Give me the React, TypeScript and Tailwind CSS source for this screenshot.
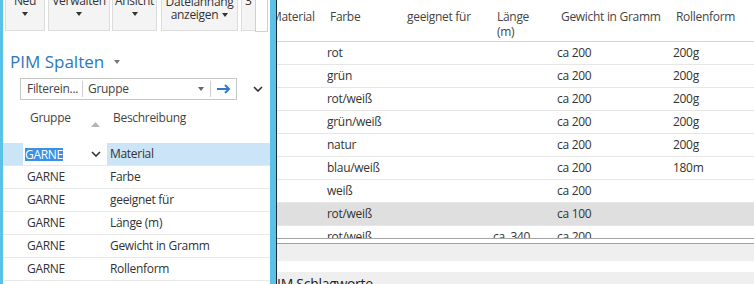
import React from "react";

const gridCols = "grid grid-cols-[268px_59px_77px_89px_64px_116px_81px]";

const rows = [
  { farbe: "rot", laenge: "", gewicht: "ca 200", rolle: "200g" },
  { farbe: "grün", laenge: "", gewicht: "ca 200", rolle: "200g" },
  { farbe: "rot/weiß", laenge: "", gewicht: "ca 200", rolle: "200g" },
  { farbe: "grün/weiß", laenge: "", gewicht: "ca 200", rolle: "200g" },
  { farbe: "natur", laenge: "", gewicht: "ca 200", rolle: "200g" },
  { farbe: "blau/weiß", laenge: "", gewicht: "ca 200", rolle: "180m" },
  { farbe: "weiß", laenge: "", gewicht: "ca 200", rolle: "" },
  { farbe: "rot/weiß", laenge: "", gewicht: "ca 100", rolle: "", active: true },
  { farbe: "rot/weiß", laenge: "ca. 340", gewicht: "ca 200", rolle: "" },
];

const spalten = ["Material", "Farbe", "geeignet für", "Länge (m)", "Gewicht in Gramm", "Rollenform"];

function Caret() {
  return (
    <svg width="6" height="4" viewBox="0 0 6 4" className="inline-block">
      <path d="M0 0h6L3 4z" fill="#333" />
    </svg>
  );
}

function Chevron() {
  return (
    <svg width="10" height="6" viewBox="0 0 10 6">
      <path d="M1 1l4 4 4-4" stroke="#333" strokeWidth="1.6" fill="none" />
    </svg>
  );
}

function ToolButton({ label, second, className }: { label: string; second?: string; className: string }) {
  return (
    <div
      className={`h-[31px] shrink-0 overflow-hidden leading-[13px] bg-[#f4f4f4] border border-t-0 border-[#dcdcdc] ${className}`}
    >
      <div className={`flex flex-col items-center ${second ? "-mt-[5px]" : "-mt-[6px]"}`}>
        <span>{label}</span>
        {second ? (
          <span className="flex items-center gap-[4px]">
            {second} <Caret />
          </span>
        ) : (
          <span className="h-[13px] flex items-center">
            <Caret />
          </span>
        )}
      </div>
    </div>
  );
}

export default function App() {
  return (
    <div
      className="relative w-[754px] h-[284px] overflow-hidden bg-white text-[12px] text-[#333] tracking-[-0.3px]"
      style={{ fontFamily: '"Open Sans", "Noto Sans", sans-serif' }}
    >
      {/* Hintergrund: Tabelle */}
      <div className="flex flex-col h-full">
        <div className="h-[239px] shrink-0 border-b border-[#a5a5a5] overflow-hidden">
          <div className={`${gridCols} h-[42px] border-b border-[#d5d5d5] text-[#444]`}>
            <div />
            <div className="pl-[3px] pt-[9px] leading-[15px]">Material</div>
            <div className="pl-[3px] pt-[9px] leading-[15px]">Farbe</div>
            <div className="pl-[3px] pt-[9px] leading-[15px]">geeignet für</div>
            <div className="pl-[4px] pt-[9px] leading-[15px]">
              Länge
              <br />
              (m)
            </div>
            <div className="pl-[4px] pt-[9px] leading-[15px]">Gewicht in Gramm</div>
            <div className="pl-[3px] pt-[9px] leading-[15px]">Rollenform</div>
          </div>
          {rows.map((r, i) => (
            <div
              key={i}
              className={`${gridCols} h-[23px] border-b border-[#e6e6e6] leading-[22px] ${r.active ? "bg-[#dfdfdf]" : ""}`}
            >
              <div />
              <div />
              <div>{r.farbe}</div>
              <div />
              <div>{r.laenge}</div>
              <div>{r.gewicht}</div>
              <div>{r.rolle}</div>
            </div>
          ))}
        </div>
        <div className="h-[4px] shrink-0" />
        <div className="h-[1px] shrink-0 bg-[#79a9e3]" />
        <div className="h-[17px] shrink-0 bg-[#efefef]" />
        <div className="h-[11px] shrink-0 bg-white" />
        <div className="h-[12px] shrink-0 overflow-hidden bg-[#efefef] pl-[269px] pt-[3px] text-[14px] leading-[18px] text-[#222]">
          PIM Schlagworte
        </div>
      </div>

      {/* Flyout: PIM Spalten */}
      <div className="absolute left-0 top-0 h-full w-[277px] flex border-r border-[#1d2b3a]">
        <div className="flex-1 flex flex-col bg-white border-l-[3px] border-r-[6px] border-[#5bc2e7]">
          <div className="flex items-start h-[32px] shrink-0 pl-[2px]">
            <ToolButton label="Neu" className="w-[40px]" />
            <ToolButton label="Verwalten" className="w-[62px] ml-[3px]" />
            <ToolButton label="Ansicht" className="w-[45px] ml-[2px]" />
            <ToolButton label="Dateianhang" second="anzeigen" className="w-[77px] ml-[4px]" />
            <div className="h-[31px] w-[14px] ml-[3px] bg-[#f4f4f4] border border-t-0 border-r-0 border-[#dcdcdc] leading-[13px] pl-[3px] overflow-hidden">
              <div className="-mt-[6px]">3</div>
            </div>
            <div className="h-[32px] w-[13px] bg-white border border-t-0 border-[#d0d0d0]" />
          </div>

          <div className="mt-[18px] pl-[7px] flex items-center gap-[10px] h-[24px] shrink-0">
            <span className="text-[17px] tracking-normal text-[#2b77bf]">PIM Spalten</span>
            <svg width="6" height="4" viewBox="0 0 6 4">
              <path d="M0 0h6L3 4z" fill="#777" />
            </svg>
          </div>

          <div className="mt-[4px] flex items-center h-[22px] shrink-0">
            <div className="ml-[17px] w-[217px] h-[22px] border border-[#c6c6c6] flex items-center">
              <span className="w-[61px] pl-[6px] text-[#444]">Filterein...</span>
              <span className="w-px h-[16px] bg-[#cfcfcf]" />
              <span className="flex-1 pl-[5px] text-[#444]">Gruppe</span>
              <svg width="6" height="4" viewBox="0 0 6 4" className="mr-[6px]">
                <path d="M0 0h6L3 4z" fill="#666" />
              </svg>
              <span className="w-px h-[16px] bg-[#cfcfcf]" />
              <svg width="14" height="10" viewBox="0 0 14 10" className="ml-[6px] mr-[5px]">
                <path d="M0 5h12M8 1l4 4-4 4" stroke="#2f7ac6" strokeWidth="2" fill="none" />
              </svg>
            </div>
            <div className="ml-[16px]">
              <Chevron />
            </div>
          </div>

          <div className="h-[43px] shrink-0 flex text-[#444] leading-[16px] pt-[10px]">
            <div className="w-[104px] pl-[27px] relative">
              Gruppe
              <svg width="9" height="5" viewBox="0 0 9 5" className="absolute left-[88px] top-[12px]">
                <path d="M0 5h9L4.5 0z" fill="#b5b5b5" />
              </svg>
            </div>
            <div className="pl-[6px]">Beschreibung</div>
          </div>

          {spalten.map((s, i) => (
            <div key={s} className="h-[23px] shrink-0 flex border-b border-[#e8e8e8] leading-[22px]">
              {i === 0 ? (
                <>
                  <div className="w-[20px] bg-[#cce4f7]" />
                  <div className="w-[84px] flex items-center pl-[2px] pr-[6px] bg-white">
                    <span className="bg-[#3b8fe4] text-white leading-[13px]">GARNE</span>
                    <span className="ml-auto">
                      <Chevron />
                    </span>
                  </div>
                  <div className="flex-1 bg-[#cce4f7] pl-[3px]">{s}</div>
                </>
              ) : (
                <>
                  <div className="w-[104px] pl-[24px]">GARNE</div>
                  <div className="flex-1 pl-[3px]">{s}</div>
                </>
              )}
            </div>
          ))}
        </div>
      </div>
    </div>
  );
}
